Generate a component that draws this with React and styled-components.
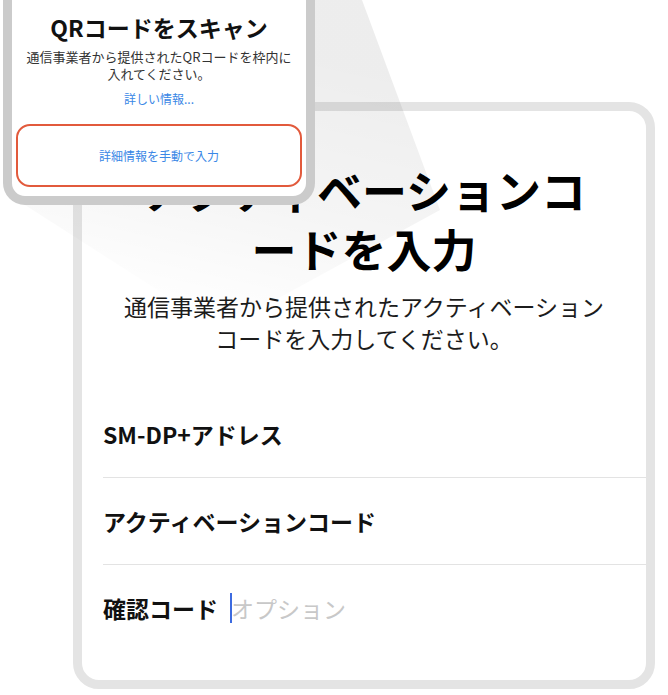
import React from 'react';
import styled, { createGlobalStyle } from 'styled-components';

const GlobalStyle = createGlobalStyle`
  html, body {
    margin: 0;
    padding: 0;
    background: #fff;
  }
  body {
    font-family: "Noto Sans CJK JP", "Noto Sans", sans-serif;
  }
`;

const Stage = styled.div`
  position: relative;
  width: 668px;
  height: 695px;
  overflow: hidden;
  box-sizing: border-box;
  padding: 102px 0 0 73px;
`;

const Beam = styled.svg`
  position: absolute;
  left: 0;
  top: 0;
  z-index: 1;
  pointer-events: none;
`;

const BigPhone = styled.div`
  position: relative;
  z-index: 0;
  width: 582px;
  height: 587px;
  box-sizing: border-box;
  border: 9px solid #e4e4e4;
  border-radius: 26px;
  background: #fff;
  overflow: hidden;
  padding-top: 49px;
`;

const BigTitle = styled.h1`
  margin: 0;
  text-align: center;
  font-size: 45px;
  line-height: 59px;
  font-weight: 700;
  color: #000;
`;

const Lead = styled.p`
  margin: 12px 0 0;
  text-align: center;
  font-size: 23px;
  line-height: 32px;
  color: #1c1c1c;
`;

const Fields = styled.div`
  margin-top: 37px;
  margin-left: 21px;
`;

const Row = styled.div`
  height: 86px;
  display: flex;
  align-items: center;
  border-bottom: ${p => (p.last ? 'none' : '1px solid #e3e3e3')};
`;

const Label = styled.span`
  font-size: 23px;
  font-weight: 700;
  color: #111;
`;

const Caret = styled.span`
  width: 2px;
  height: 30px;
  margin-left: 12px;
  background: #3d6be0;
`;

const Placeholder = styled.span`
  margin-left: -1px;
  font-size: 23px;
  color: #c8c8c8;
`;

const SmallPhone = styled.div`
  position: absolute;
  z-index: 2;
  left: 3px;
  top: -40px;
  width: 312px;
  height: 245px;
  box-sizing: border-box;
  border: 9px solid #cbcbcb;
  border-radius: 22px;
  background: #fff;
  display: flex;
  flex-direction: column;
  align-items: center;
  padding: 43px 4px 0;
`;

const SmallTitle = styled.h2`
  margin: 0;
  font-size: 23px;
  line-height: 30px;
  font-weight: 700;
  color: #111;
`;

const SmallText = styled.p`
  margin: 6px 0 0;
  text-align: center;
  font-size: 13px;
  line-height: 17px;
  color: #333;
`;

const Link = styled.a`
  margin-top: 8px;
  font-size: 12px;
  line-height: 17px;
  color: #3a87e6;
  text-decoration: none;
`;

const ManualButton = styled.div`
  align-self: stretch;
  height: 63px;
  margin-top: 17px;
  box-sizing: border-box;
  border: 2px solid #e25a3c;
  border-radius: 14px;
  display: flex;
  align-items: center;
  justify-content: center;
  font-size: 12px;
  color: #3a87e6;
`;

export default function App() {
  return (
    <>
      <GlobalStyle />
      <Stage>
        <BigPhone>
          <BigTitle>
            アクティベーションコ
            <br />
            ードを入力
          </BigTitle>
          <Lead>
            通信事業者から提供されたアクティベーション
            <br />
            コードを入力してください。
          </Lead>
          <Fields>
            <Row>
              <Label>SM-DP+アドレス</Label>
            </Row>
            <Row>
              <Label>アクティベーションコード</Label>
            </Row>
            <Row last>
              <Label>確認コード</Label>
              <Caret />
              <Placeholder>オプション</Placeholder>
            </Row>
          </Fields>
        </BigPhone>

        <Beam width="668" height="695" viewBox="0 0 668 695">
          <defs>
            <linearGradient id="beam" x1="320" y1="60" x2="260" y2="330" gradientUnits="userSpaceOnUse">
              <stop offset="0" stopColor="#000" stopOpacity="0.07" />
              <stop offset="0.55" stopColor="#000" stopOpacity="0.04" />
              <stop offset="1" stopColor="#000" stopOpacity="0" />
            </linearGradient>
          </defs>
          <polygon points="300,0 362,0 440,210 220,330 25,205 300,205" fill="url(#beam)" />
        </Beam>

        <SmallPhone>
          <SmallTitle>QRコードをスキャン</SmallTitle>
          <SmallText>
            通信事業者から提供されたQRコードを枠内に
            <br />
            入れてください。
          </SmallText>
          <Link>詳しい情報...</Link>
          <ManualButton>詳細情報を手動で入力</ManualButton>
        </SmallPhone>
      </Stage>
    </>
  );
}
